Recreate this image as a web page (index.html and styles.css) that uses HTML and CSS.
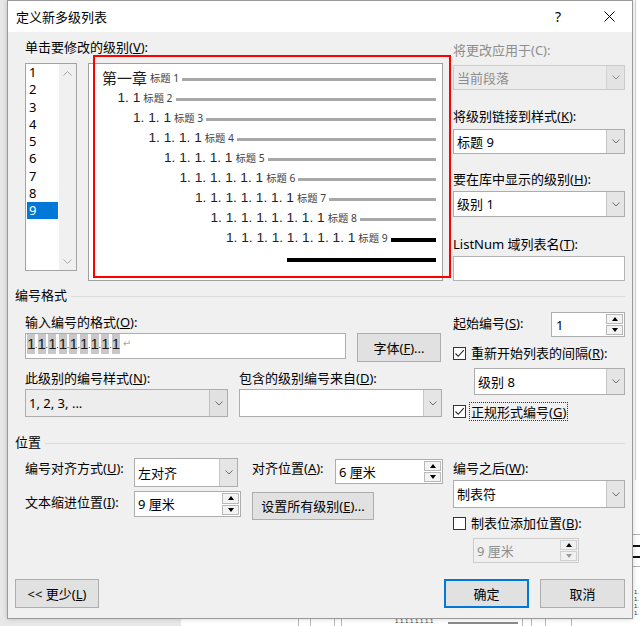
FILE: index.html
```html
<!DOCTYPE html>
<html lang="zh-CN">
<head>
<meta charset="utf-8">
<title>定义新多级列表</title>
<link rel="stylesheet" href="styles.css">
</head>
<body>
<div class="desk">
  <div class="doc">
    <i class="dv dv1"></i><i class="dv dv2"></i><i class="dv dv3"></i><i class="dv dv4"></i>
    <span class="dtxt">1.1.1.1.1.1.1.1</span><i class="dline"></i>
    <i class="dv dv5"></i><i class="dv dv6"></i><i class="dv dv7"></i><i class="dv dv8"></i>
    <i class="rv"></i>
    <i class="rh rh1"></i><i class="rh rh2"></i><i class="rh rh3"></i><i class="rh rh4"></i>
    <span class="rt">1.<br>1.<br>1.<br>1.</span>
  </div>

  <div class="dialog">
    <div class="titlebar">
      <span class="title">定义新多级列表</span>
      <span class="help">?</span>
      <span class="close"><svg width="11" height="11" viewBox="0 0 11 11"><path d="M0.5 0.5L10.5 10.5M10.5 0.5L0.5 10.5" stroke="#000" stroke-width="1" fill="none"/></svg></span>
    </div>

    <div class="body">
      <!-- top section -->
      <div class="sec-row top">
        <div class="col-left">
          <div class="lbl">单击要修改的级别(<u>V</u>):</div>
          <div class="level-row">
            <div class="levels">
              <ul class="lv-items">
                <li>1</li><li>2</li><li>3</li><li>4</li><li>5</li><li>6</li><li>7</li><li>8</li><li class="sel">9</li>
              </ul>
              <div class="vscroll">
                <svg width="9" height="5" viewBox="0 0 9 5"><path d="M0.5 4.5L4.5 0.5L8.5 4.5" fill="none" stroke="#a6a6a6"/></svg>
                <svg width="9" height="5" viewBox="0 0 9 5"><path d="M0.5 0.5L4.5 4.5L8.5 0.5" fill="none" stroke="#a6a6a6"/></svg>
              </div>
            </div>
            <div class="preview">
              <div class="pv l1"><span class="chap">第一章</span><span class="cap">标题 1</span><i class="bar"></i></div>
              <div class="pv l2"><span class="num">1. 1</span><span class="cap">标题 2</span><i class="bar"></i></div>
              <div class="pv l3"><span class="num">1. 1. 1</span><span class="cap">标题 3</span><i class="bar"></i></div>
              <div class="pv l4"><span class="num">1. 1. 1. 1</span><span class="cap">标题 4</span><i class="bar"></i></div>
              <div class="pv l5"><span class="num">1. 1. 1. 1. 1</span><span class="cap">标题 5</span><i class="bar"></i></div>
              <div class="pv l6"><span class="num">1. 1. 1. 1. 1. 1</span><span class="cap">标题 6</span><i class="bar"></i></div>
              <div class="pv l7"><span class="num">1. 1. 1. 1. 1. 1. 1</span><span class="cap">标题 7</span><i class="bar"></i></div>
              <div class="pv l8"><span class="num">1. 1. 1. 1. 1. 1. 1. 1</span><span class="cap">标题 8</span><i class="bar"></i></div>
              <div class="pv l9"><span class="num">1. 1. 1. 1. 1. 1. 1. 1. 1</span><span class="cap">标题 9</span><i class="bar dark"></i></div>
              <div class="pv lend"><i class="bar dark"></i></div>
            </div>
          </div>
        </div>
        <div class="col-right top-right">
          <div class="lbl dis">将更改应用于(C):</div>
          <div class="combo dis m7"><span class="val">当前段落</span><span class="drop"><svg width="8" height="5" viewBox="0 0 8 5"><path d="M0.5 0.5L4 4L7.5 0.5" fill="none" stroke="#8a8a8a"/></svg></span></div>
          <div class="lbl m18">将级别链接到样式(<u>K</u>):</div>
          <div class="combo m5"><span class="val">标题 9</span><span class="drop"><svg width="8" height="5" viewBox="0 0 8 5"><path d="M0.5 0.5L4 4L7.5 0.5" fill="none" stroke="#6b6b6b"/></svg></span></div>
          <div class="lbl m17">要在库中显示的级别(<u>H</u>):</div>
          <div class="combo h26 m4"><span class="val">级别 1</span><span class="drop"><svg width="8" height="5" viewBox="0 0 8 5"><path d="M0.5 0.5L4 4L7.5 0.5" fill="none" stroke="#6b6b6b"/></svg></span></div>
          <div class="lbl m19">ListNum 域列表名(<u>T</u>):</div>
          <div class="textbox m4"></div>
        </div>
      </div>

      <!-- numbering format -->
      <div class="sec-head fmt-head">编号格式</div>
      <div class="sec-row">
        <div class="col-left fmt-left">
          <div class="lbl">输入编号的格式(<u>O</u>):</div>
          <div class="row-a">
            <div class="fmt-input">
              <span class="d">1</span><span class="p">.</span><span class="d">1</span><span class="p">.</span><span class="d">1</span><span class="p">.</span><span class="d">1</span><span class="p">.</span><span class="d">1</span><span class="p">.</span><span class="d">1</span><span class="p">.</span><span class="d">1</span><span class="p">.</span><span class="d">1</span><span class="p">.</span><span class="d">1</span><span class="ret">↵</span>
            </div>
            <div class="btn font-btn">字体(<u>F</u>)...</div>
          </div>
          <div class="row-b"><span class="lbl w214">此级别的编号样式(<u>N</u>):</span><span class="lbl">包含的级别编号来自(<u>D</u>):</span></div>
          <div class="row-c">
            <div class="combo ro dd"><span class="val">1, 2, 3, ...</span><span class="drop"><svg width="8" height="5" viewBox="0 0 8 5"><path d="M0.5 0.5L4 4L7.5 0.5" fill="none" stroke="#6b6b6b"/></svg></span></div>
            <div class="combo dd"><span class="val"></span><span class="drop"><svg width="8" height="5" viewBox="0 0 8 5"><path d="M0.5 0.5L4 4L7.5 0.5" fill="none" stroke="#6b6b6b"/></svg></span></div>
          </div>
        </div>
        <div class="col-right fmt-right">
          <div class="start-row">
            <span class="lbl">起始编号(<u>S</u>):</span>
            <div class="spin start-spin"><span class="val">1</span><span class="arrows"><b class="up"></b><b class="dn"></b></span></div>
          </div>
          <div class="chk-row m6"><span class="chk on"><svg width="11" height="11" viewBox="0 0 11 11"><path d="M1.5 5.5L4.2 8.3L9.8 2.2" fill="none" stroke="#222" stroke-width="1.1"/></svg></span><span>重新开始列表的间隔(<u>R</u>):</span></div>
          <div class="combo restart m5"><span class="val">级别 8</span><span class="drop"><svg width="8" height="5" viewBox="0 0 8 5"><path d="M0.5 0.5L4 4L7.5 0.5" fill="none" stroke="#6b6b6b"/></svg></span></div>
          <div class="chk-row m6"><span class="chk on"><svg width="11" height="11" viewBox="0 0 11 11"><path d="M1.5 5.5L4.2 8.3L9.8 2.2" fill="none" stroke="#222" stroke-width="1.1"/></svg></span><span class="focus">正规形式编号(<u>G</u>)</span></div>
        </div>
      </div>

      <!-- position -->
      <div class="sec-head pos-head">位置</div>
      <div class="sec-row">
        <div class="col-left">
          <div class="pos-grid">
            <span class="lbl g-l1">编号对齐方式(<u>U</u>):</span>
            <div class="combo align-dd"><span class="val">左对齐</span><span class="drop"><svg width="8" height="5" viewBox="0 0 8 5"><path d="M0.5 0.5L4 4L7.5 0.5" fill="none" stroke="#6b6b6b"/></svg></span></div>
            <span class="lbl g-l2">对齐位置(<u>A</u>):</span>
            <div class="spin at-spin"><span class="val">6 厘米</span><span class="arrows"><b class="up"></b><b class="dn"></b></span></div>
            <span class="lbl g-l3">文本缩进位置(<u>I</u>):</span>
            <div class="spin ind-spin"><span class="val">9 厘米</span><span class="arrows"><b class="up"></b><b class="dn"></b></span></div>
            <div class="btn all-btn">设置所有级别(<u>E</u>)...</div>
          </div>
        </div>
        <div class="col-right pos-right">
          <div class="lbl">编号之后(<u>W</u>):</div>
          <div class="combo after-dd m4"><span class="val">制表符</span><span class="drop"><svg width="8" height="5" viewBox="0 0 8 5"><path d="M0.5 0.5L4 4L7.5 0.5" fill="none" stroke="#6b6b6b"/></svg></span></div>
          <div class="chk-row m5"><span class="chk"></span><span>制表位添加位置(<u>B</u>):</span></div>
          <div class="spin dis tab-spin m5"><span class="val">9 厘米</span><span class="arrows"><b class="up"></b><b class="dn grey"></b></span></div>
        </div>
      </div>

      <div class="footer">
        <div class="btn less-btn">&lt;&lt; 更少(<u>L</u>)</div>
        <div class="spacer"></div>
        <div class="btn ok-btn">确定</div>
        <div class="btn cancel-btn">取消</div>
      </div>
    </div>
  </div>

  <div class="annot"></div>
</div>
</body>
</html>
```

FILE: styles.css
```css
* { box-sizing: border-box; }
html, body { margin: 0; padding: 0; }
body {
  width: 640px; height: 626px; overflow: hidden;
  font-family: "Noto Sans", "Noto Sans CJK SC", sans-serif;
  font-size: 13px; line-height: 16px; color: #000;
}
u { text-decoration: underline; text-underline-offset: 1px; }
ul { list-style: none; margin: 0; padding: 0; }

.desk { position: relative; width: 640px; height: 626px; background: #e8e8e8; overflow: hidden; }

/* document behind the dialog */
.doc { position: absolute; left: 181px; top: 0; right: 0; bottom: 0; background: #fff; }
.dv { position: absolute; top: 619px; width: 1px; height: 7px; background: #b8b8b8; }
.dv1 { left: 117px; } .dv2 { left: 129px; } .dv3 { left: 153px; } .dv4 { left: 160px; }
.dv5 { left: 341px; } .dv6 { left: 350px; } .dv7 { left: 364px; } .dv8 { left: 390px; }
.dtxt { position: absolute; left: 214px; top: 617px; font: 6px/8px "Liberation Sans", sans-serif; color: #333; }
.dline { position: absolute; left: 267px; top: 622px; width: 70px; height: 2px; background: #8a8a8a; }
.rv { position: absolute; left: 454px; top: 0; width: 1px; height: 480px; background: #d6d6d6; }
.rh { position: absolute; left: 452px; width: 8px; }
.rh1 { top: 534px; height: 1px; background: #b0b0b0; }
.rh2 { top: 545px; height: 2px; background: #111; }
.rh3 { top: 556px; height: 2px; background: #111; }
.rh4 { top: 566px; height: 1px; background: #b0b0b0; }
.rt { position: absolute; left: 453px; top: 589px; font: 6px/7px "Liberation Sans", sans-serif; color: #333; }

/* dialog window */
.dialog {
  position: absolute; left: 7px; top: 0; width: 626px; height: 619px;
  border: 1px solid #9a9a9a; background: #f0f0f0;
  display: flex; flex-direction: column;
  box-shadow: 0 0 5px rgba(0,0,0,0.18);
}
.titlebar { height: 31px; background: #fff; display: flex; align-items: center; flex: none; }
.title { flex: 1; padding-left: 8px; }
.help { width: 20px; text-align: center; font-size: 14px; margin-right: 18px; }
.close { width: 46px; height: 31px; display: flex; align-items: center; justify-content: center; }

.body { flex: 1; display: flex; flex-direction: column; padding: 0 7px; }

.sec-row { display: flex; }
.col-left { margin-left: 10px; width: 418px; flex: none; }
.col-right { margin-left: 10px; width: 172px; flex: none; display: flex; flex-direction: column; }

.lbl { height: 16px; white-space: nowrap; }
.lbl.dis { color: #8d8d8d; }
.m4 { margin-top: 4px; } .m5 { margin-top: 5px; } .m6 { margin-top: 6px; } .m7 { margin-top: 7px; }
.m17 { margin-top: 17px; } .m18 { margin-top: 18px; } .m19 { margin-top: 19px; }

/* top section */
.sec-row.top { padding-top: 7px; }
.top-right { padding-top: 3px; }
.level-row { display: flex; gap: 11px; margin-top: 8px; align-items: flex-start; }

.levels { width: 52px; height: 208px; border: 1px solid #a3a3a3; background: #fff; display: flex; }
.lv-items { width: 33px; padding: 0 1px; }
.lv-items li { height: 17.25px; line-height: 17px; padding-left: 2px; }
.lv-items li.sel { background: #0078d7; color: #fff; }
.vscroll { width: 17px; background: #f0f0f0; display: flex; flex-direction: column; justify-content: space-between; align-items: center; padding: 7px 0 6px; }
.vscroll svg { display: block; }

.preview { width: 355px; height: 218px; border: 1px solid #a0a0a0; background: #fff; padding: 4px 6px 0 0; }
.pv { height: 20px; display: flex; align-items: center; line-height: 20px; white-space: pre; }
.l1 { padding-left: 13px; } .l2 { padding-left: 28.5px; } .l3 { padding-left: 44px; }
.l4 { padding-left: 59.5px; } .l5 { padding-left: 75px; } .l6 { padding-left: 90.5px; }
.l7 { padding-left: 106px; } .l8 { padding-left: 121.5px; } .l9 { padding-left: 137px; }
.lend { padding-left: 198px; }
.chap { font-family: "Noto Sans CJK SC", sans-serif; font-size: 15px; color: #1c1c1c; }
.num { font-family: "Liberation Sans", sans-serif; font-size: 13.7px; color: #1e1e28; }
.cap { font-size: 10.3px; color: #3e3e3e; margin-left: 3px; }
.bar { flex: 1; height: 3px; background: #a8a8a8; margin-left: 3px; margin-top: 3px; }
.bar.dark { height: 4px; background: #000; }
.lend .bar { margin-left: 0; }

/* combo boxes */
.combo { display: flex; height: 25px; border: 1px solid #adadad; background: #fff; flex: none; }
.combo.h26 { height: 26px; }
.combo .val { flex: 1; padding-left: 3px; display: flex; align-items: center; white-space: nowrap; overflow: hidden; }
.combo .drop { width: 18px; background: #e5e5e5; border-left: 1px solid #c6c6c6; display: flex; align-items: center; justify-content: center; }
.combo .drop svg { display: block; }
.combo.dis { background: #ececec; border-color: #cccccc; color: #8d8d8d; }
.combo.dis .drop { background: #e3e3e3; border-left-color: #d2d2d2; }
.combo.ro { background: #ededed; }
.combo.ro .drop { background: #e1e1e1; border-left-color: #c0c0c0; }
.textbox { height: 25px; border: 1px solid #b4b4b4; background: #fff; flex: none; }

/* section headings */
.sec-head { height: 16px; display: flex; align-items: center; white-space: nowrap; }
.sec-head::after { content: ""; flex: 1; height: 1px; background: #dcdcdc; margin-left: 4px; margin-top: 2px; }
.fmt-head { margin-top: 6px; }
.pos-head { margin-top: 13px; }

/* numbering format */
.fmt-left { padding-top: 11px; }
.row-a { display: flex; gap: 11px; margin-top: 3px; align-items: flex-start; }
.fmt-input { width: 321px; height: 26px; border: 1px solid #adadad; background: #fff; display: flex; align-items: flex-start; padding-left: 1px; font-family: "Liberation Sans", sans-serif; font-size: 15px; line-height: 20px; }
.fmt-input .d { width: 8px; height: 20px; background: #c8c8c8; text-align: center; color: #1a1a1a; }
.fmt-input .p { width: 2.6px; font-size: 9px; line-height: 22px; color: #1a1a1a; overflow: hidden; }
.fmt-input .ret { margin-left: 3px; font-family: "DejaVu Sans", sans-serif; font-size: 10px; color: #a8a8a8; }
.btn { display: flex; align-items: center; justify-content: center; background: #e1e1e1; border: 1px solid #adadad; white-space: nowrap; flex: none; }
.font-btn { width: 84px; height: 29px; }
.row-b { display: flex; margin-top: 8px; }
.w214 { width: 214px; }
.row-c { display: flex; gap: 11px; margin-top: 3px; }
.combo.dd { width: 203px; height: 28px; }

.fmt-right { padding-top: 9px; }
.start-row { display: flex; align-items: center; justify-content: space-between; height: 25px; }
.start-row .lbl { margin-top: -4px; }
.spin { display: flex; border: 1px solid #adadad; background: #fff; flex: none; }
.spin .val { flex: 1; padding-left: 3px; display: flex; align-items: center; white-space: nowrap; }
.spin .arrows { width: 18px; display: flex; flex-direction: column; gap: 1px; padding: 1px 1px 1px 0; }
.spin .arrows b { flex: 1; background: #f3f3f3; border: 1px solid #b9b9b9; display: flex; align-items: center; justify-content: center; }
.spin .arrows b::before { content: ""; width: 0; height: 0; border-left: 3.5px solid transparent; border-right: 3.5px solid transparent; }
.spin .up::before { border-bottom: 4px solid #000; }
.spin .dn::before { border-top: 4px solid #000; }
.spin .dn.grey::before { border-top-color: #9a9a9a; }
.start-spin { width: 74px; height: 25px; }
.start-spin .val { padding-left: 4px; }
.spin.dis { background: #f0f0f0; border-color: #cccccc; color: #8d8d8d; }
.spin.dis .arrows b { background: #f0f0f0; border-color: #cfcfcf; }

.chk-row { display: flex; align-items: center; gap: 5px; height: 20px; white-space: nowrap; }
.chk { width: 13px; height: 13px; border: 1px solid #333; background: #fff; display: flex; align-items: center; justify-content: center; flex: none; }
.chk svg { display: block; }
.focus { border: 1px dotted #333; padding: 1px 1px 0 1px; line-height: 16px; margin-left: -2px; }
.combo.restart { margin-left: 21px; width: 151px; height: 27px; }

/* position */
.pos-grid { display: grid; grid-template-columns: 109px 107px 11px 83px 108px; grid-template-rows: 29px 29px; row-gap: 4px; margin-top: 8px; }
.g-l1 { grid-column: 1; grid-row: 1; margin-top: 2px; }
.align-dd { grid-column: 2; grid-row: 1; width: 104px; height: 29px; }
.g-l2 { grid-column: 4; grid-row: 1; margin-top: 2px; }
.at-spin { grid-column: 5; grid-row: 1; width: 108px; height: 25px; margin-top: 1px; }
.g-l3 { grid-column: 1; grid-row: 2; margin-top: 3px; }
.ind-spin { grid-column: 2; grid-row: 2; width: 107px; height: 26px; }
.all-btn { grid-column: 4 / span 2; grid-row: 2; width: 122px; height: 28px; margin-top: 1px; }

.pos-right { padding-top: 10px; }
.combo.after-dd { height: 28px; }
.tab-spin { margin-left: 20px; width: 106px; height: 25px; }

/* footer */
.footer { margin-top: auto; display: flex; gap: 11px; padding-bottom: 10px; }
.footer .spacer { flex: 1; }
.less-btn { width: 84px; height: 29px; }
.ok-btn { width: 85px; height: 29px; border: 1px solid #0078d7; box-shadow: inset 0 0 0 1px #0078d7; }
.cancel-btn { width: 85px; height: 29px; }

/* red annotation frame */
.annot { position: absolute; left: 93px; top: 55px; width: 358px; height: 223px; border: 2px solid #ff0000; }
```
